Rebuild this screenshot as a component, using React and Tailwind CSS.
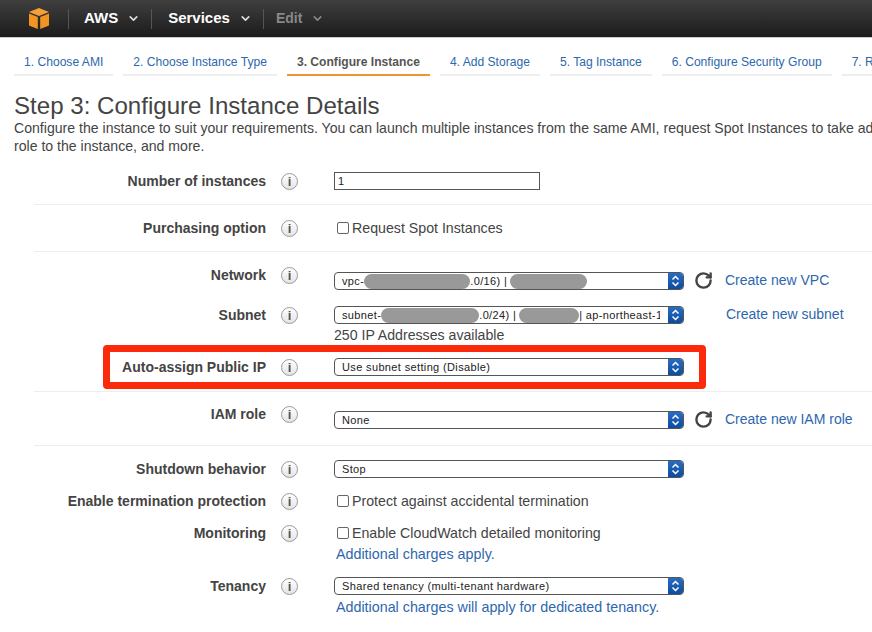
import { ChevronDown, RotateCw } from "lucide-react";

const tabs = [
    "1. Choose AMI",
    "2. Choose Instance Type",
    "3. Configure Instance",
    "4. Add Storage",
    "5. Tag Instance",
    "6. Configure Security Group",
    "7. Review",
];

const Info = () => (
    <div className="mt-px flex h-[17px] w-[17px] items-center justify-center rounded-full border border-[#9a9a9a] bg-gradient-to-b from-white to-[#e4e4e4] font-['Liberation_Sans',sans-serif] text-[13px] font-bold leading-none text-[#555]">
        i
    </div>
);

const Blur = ({ className }) => (
    <span className={`h-[15px] shrink-0 rounded-full bg-[#999] ${className}`}></span>
);

const Select = ({ children }) => (
    <div className="flex h-[18px] w-[350px] shrink-0 items-center overflow-hidden rounded-[4px] border border-[#555] bg-white">
        <div className="mr-[8px] flex min-w-0 flex-1 items-center overflow-hidden whitespace-nowrap pl-[7px] text-[11px] tracking-[0.36px] text-[#222]">
            {children}
        </div>
        <div className="flex h-[18px] w-[15px] shrink-0 items-center justify-center bg-gradient-to-b from-[#2a6fc4] to-[#0b4a9c]">
            <svg width="9" height="12" viewBox="0 0 9 12" fill="none" stroke="white" strokeWidth="1.5">
                <path d="M1.5 4.5 4.5 1.5 7.5 4.5" />
                <path d="M1.5 7.5 4.5 10.5 7.5 7.5" />
            </svg>
        </div>
    </div>
);

const Check = ({ label }) => (
    <div className="flex h-[18px] items-center">
        <span className="ml-[3px] h-[12px] w-[12px] rounded-[2px] border border-[#666] bg-white"></span>
        <span className="ml-[3px] text-[14.2px] leading-[18px] text-[#444]">{label}</span>
    </div>
);

const Refresh = () => (
    <RotateCw size={19} strokeWidth={3} className="-mt-[2px] ml-[10px] shrink-0 text-[#444]" />
);

const Row = ({ label, className = "", children }) => (
    <div className={`relative flex items-start ${className}`}>
        <div className="h-[18px] w-[232px] text-right text-[14px] font-bold leading-[18px] text-[#444]">
            {label}
        </div>
        <div className="ml-[15px] w-[53px]">
            <Info />
        </div>
        <div className="min-w-0 flex-1">{children}</div>
    </div>
);

const App = () => {
    return (
        <div className="h-[632px] w-[872px] overflow-hidden bg-white font-['Liberation_Sans',sans-serif]">
            <div className="flex h-[38px] items-center border-b border-[#ccc] bg-gradient-to-b from-[#3f3f3f] to-[#1c1c1c]">
                <svg className="ml-[29px]" width="20" height="21" viewBox="0 0 20 21">
                    <path d="M10 0 20 4 10 8 0 4Z" fill="#f7a035" />
                    <path d="M0 5.5 8.8 9V21L0 17.5Z" fill="#f29422" />
                    <path d="M20 5.5 11.2 9V21L20 17.5Z" fill="#f29422" />
                </svg>
                <div className="ml-[19px] h-[20px] w-px bg-[#555]"></div>
                <span className="ml-[15px] text-[15px] font-bold text-white">AWS</span>
                <ChevronDown size={13} strokeWidth={3} className="ml-[9px] text-[#ddd]" />
                <div className="ml-[11px] h-[20px] w-px bg-[#555]"></div>
                <span className="ml-[16px] text-[15px] font-bold text-white">Services</span>
                <ChevronDown size={13} strokeWidth={3} className="ml-[9px] text-[#ddd]" />
                <div className="ml-[11px] h-[20px] w-px bg-[#555]"></div>
                <span className="ml-[12px] text-[14px] font-bold text-[#888]">Edit</span>
                <ChevronDown size={13} strokeWidth={3} className="ml-[9px] text-[#888]" />
            </div>

            <div className="mt-[15px] flex gap-[10px] whitespace-nowrap pl-[14px]">
                {tabs.map((tab) => {
                    const active = tab.startsWith("3.");
                    return (
                        <div
                            key={tab}
                            className={`h-[23px] shrink-0 border-b-2 px-[10px] text-[12.1px] leading-[18px] ${
                                active
                                    ? "border-[#f0962e] font-bold text-[#555]"
                                    : "border-[#eee] text-[#2d67ad]"
                            }`}
                        >
                            {tab}
                        </div>
                    );
                })}
            </div>

            <div className="whitespace-nowrap pl-[14px] pt-[16px]">
                <h1 className="h-[27px] text-[24.1px] leading-[27px] text-[#444]">
                    Step 3: Configure Instance Details
                </h1>
                <p className="text-[14.1px] leading-[18px] text-[#444]">
                    Configure the instance to suit your requirements. You can launch multiple instances from the same AMI, request Spot Instances to take advantage of the lower pricing, assign an access management
                    <br />
                    role to the instance, and more.
                </p>
            </div>

            <div className="ml-[34px]">
                <div className="border-b border-[#eee] pb-[14px] pt-[17px]">
                    <Row label="Number of instances">
                        <input
                            readOnly
                            value="1"
                            className="block h-[18px] w-[206px] border border-[#555] px-[3px] text-[11px] text-[#222]"
                        />
                    </Row>
                </div>

                <div className="border-b border-[#eee] py-[14px]">
                    <Row label="Purchasing option">
                        <Check label="Request Spot Instances" />
                    </Row>
                </div>

                <div className="border-b border-[#eee] pb-[15px] pt-[14px]">
                    <Row label="Network" className="mb-[16px]">
                        <div className="mt-[6px] flex h-[18px] items-center">
                            <Select>
                                <span>vpc-</span>
                                <Blur className="w-[106px]" />
                                <span>.0/16) | </span>
                                <Blur className="ml-[3px] w-[77px]" />
                            </Select>
                            <Refresh />
                            <a className="-mt-[2px] ml-[12px] text-[14px] text-[#2d67ad]">Create new VPC</a>
                        </div>
                    </Row>
                    <Row label="Subnet" className="mb-[14px]">
                        <div className="flex h-[18px] items-center">
                            <Select>
                                <span>subnet-</span>
                                <Blur className="w-[98px]" />
                                <span>.0/24) | </span>
                                <Blur className="ml-[3px] w-[60px]" />
                                <span>| ap-northeast-1</span>
                            </Select>
                            <a className="-mt-[2px] ml-[42px] text-[14px] text-[#2d67ad]">Create new subnet</a>
                        </div>
                        <div className="mt-[2px] h-[18px] text-[14.15px] leading-[18px] text-[#444]">
                            250 IP Addresses available
                        </div>
                    </Row>
                    <Row label="Auto-assign Public IP">
                        <Select>Use subnet setting (Disable)</Select>
                        <div className="absolute left-[69px] top-[-13px] h-[44px] w-[603px] rounded-[4px] border-[7px] border-[#fb2a0a]"></div>
                    </Row>
                </div>

                <div className="border-b border-[#eee] pb-[16px] pt-[13px]">
                    <Row label="IAM role">
                        <div className="mt-[6px] flex h-[18px] items-center">
                            <Select>None</Select>
                            <Refresh />
                            <a className="-mt-[2px] ml-[12px] text-[14px] text-[#2d67ad]">Create new IAM role</a>
                        </div>
                    </Row>
                </div>

                <div className="pt-[14px]">
                    <Row label="Shutdown behavior" className="mb-[14px]">
                        <Select>Stop</Select>
                    </Row>
                    <Row label="Enable termination protection" className="mb-[14px]">
                        <Check label="Protect against accidental termination" />
                    </Row>
                    <Row label="Monitoring" className="mb-[14px]">
                        <Check label="Enable CloudWatch detailed monitoring" />
                        <a className="ml-[2px] mt-[3px] block text-[14.3px] leading-[18px] text-[#2d67ad]">
                            Additional charges apply.
                        </a>
                    </Row>
                    <Row label="Tenancy">
                        <Select>Shared tenancy (multi-tenant hardware)</Select>
                        <a className="ml-[2px] mt-[3px] block text-[14.3px] leading-[18px] text-[#2d67ad]">
                            Additional charges will apply for dedicated tenancy.
                        </a>
                    </Row>
                </div>
            </div>
        </div>
    );
};

export default App;
